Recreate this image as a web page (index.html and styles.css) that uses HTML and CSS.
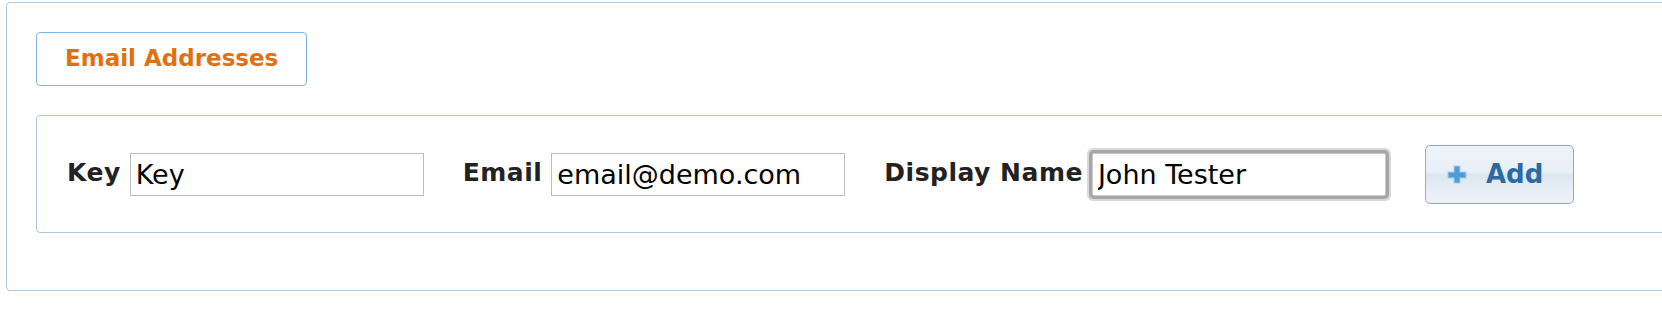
FILE: index.html
```html
<!doctype html>
<html>
<head>
<meta charset="utf-8">
<title>Email Addresses</title>
<link rel="stylesheet" href="styles.css">
</head>
<body>
<div class="panel">
  <div class="legend">Email Addresses</div>
  <div class="entry">
    <label class="field">
      <span class="field-label">Key</span>
      <input class="field-input" type="text" value="Key">
    </label>
    <label class="field">
      <span class="field-label">Email</span>
      <input class="field-input" type="text" value="email@demo.com">
    </label>
    <label class="field">
      <span class="field-label">Display Name</span>
      <input class="field-input is-focused" type="text" value="John Tester">
    </label>
    <button class="add-btn" type="button">
      <svg class="add-icon" width="20" height="19" viewBox="0 0 20 19">
        <path d="M6.5 0.5h7v6h6v7h-6v5h-7v-5h-6v-7h6z" fill="#a9cdeb"/>
        <path d="M7.5 1.5h5v6h6v5h-6v5h-5v-5h-6v-5h6z" fill="#4f9ad8"/>
      </svg>
      Add
    </button>
  </div>
</div>
</body>
</html>
```

FILE: styles.css
```css
body {
    margin: 0;
    padding: 2px 0 0 6px;
    overflow: hidden;
    background: #ffffff;
    font-family: "DejaVu Sans", "Liberation Sans", sans-serif;
}

.panel {
    width: 1720px;
    height: 289px;
    box-sizing: border-box;
    border: 1px solid #a8cae2;
    border-radius: 4px;
    padding: 29px 0 0 29px;
}

.legend {
    display: inline-flex;
    align-items: center;
    height: 54px;
    box-sizing: border-box;
    padding: 0 28px 2px 28px;
    border: 1px solid #7fb6e2;
    border-radius: 4px;
    color: #e27010;
    font-size: 23px;
    font-weight: bold;
}

.entry {
    display: flex;
    align-items: center;
    gap: 39px;
    margin-top: 29px;
    height: 118px;
    box-sizing: border-box;
    border: 1px solid #a8cae2;
    border-radius: 4px;
    padding: 0 0 0 30px;
}

.field {
    display: flex;
    align-items: center;
    gap: 9px;
}

.field-label {
    color: #222222;
    font-size: 25px;
    font-weight: bold;
    letter-spacing: 0.5px;
    padding-bottom: 4px;
}

.field-input {
    width: 294px;
    height: 43px;
    box-sizing: border-box;
    margin: 0;
    padding: 1px 5px 0;
    border: 1px solid #bdbdbd;
    border-radius: 0;
    background: #ffffff;
    color: #000000;
    font-family: "DejaVu Sans", "Liberation Sans", sans-serif;
    font-size: 27px;
    outline: none;
}

.field-input.is-focused {
    border-color: #c9c9c9;
    border-radius: 2px;
    box-shadow: 0 0 0 3px #a6a6a6, 0 0 0 5px #d8d8d8;
}

.add-btn {
    display: flex;
    align-items: center;
    gap: 19px;
    height: 59px;
    box-sizing: border-box;
    margin: 0;
    padding: 0 30px 0 21px;
    border: 1px solid #8eabc6;
    border-radius: 5px;
    background: linear-gradient(#eef3f8 0%, #e9eff6 46%, #dce6f0 50%, #e6edf5 75%, #eef3f8 100%);
    color: #2b6ba2;
    font-family: "DejaVu Sans", "Liberation Sans", sans-serif;
    font-size: 26px;
    font-weight: bold;
}

.add-icon {
    display: block;
}
```
